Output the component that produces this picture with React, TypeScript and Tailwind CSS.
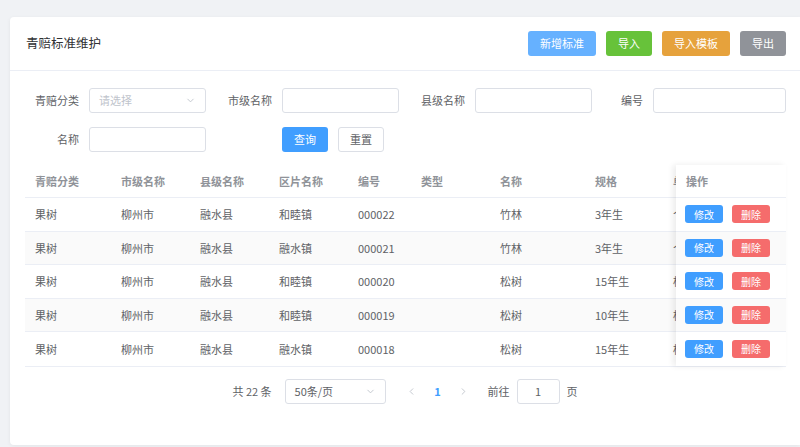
import { ChevronDown, ChevronLeft, ChevronRight } from 'lucide-react'

type Row = {
  cat: string
  city: string
  county: string
  area: string
  code: string
  type: string
  name: string
  spec: string
  unit: string
}

const rows: Row[] = [
  { cat: '果树', city: '柳州市', county: '融水县', area: '和睦镇', code: '000022', type: '', name: '竹林', spec: '3年生', unit: '个' },
  { cat: '果树', city: '柳州市', county: '融水县', area: '融水镇', code: '000021', type: '', name: '竹林', spec: '3年生', unit: '个' },
  { cat: '果树', city: '柳州市', county: '融水县', area: '和睦镇', code: '000020', type: '', name: '松树', spec: '15年生', unit: '棵' },
  { cat: '果树', city: '柳州市', county: '融水县', area: '和睦镇', code: '000019', type: '', name: '松树', spec: '10年生', unit: '棵' },
  { cat: '果树', city: '柳州市', county: '融水县', area: '融水镇', code: '000018', type: '', name: '松树', spec: '15年生', unit: '棵' }
]

const cols: { key: keyof Row; label: string; w: string }[] = [
  { key: 'cat', label: '青赔分类', w: 'w-[86px]' },
  { key: 'city', label: '市级名称', w: 'w-[79px]' },
  { key: 'county', label: '县级名称', w: 'w-[79px]' },
  { key: 'area', label: '区片名称', w: 'w-[79px]' },
  { key: 'code', label: '编号', w: 'w-[63px]' },
  { key: 'type', label: '类型', w: 'w-[79px]' },
  { key: 'name', label: '名称', w: 'w-[95px]' },
  { key: 'spec', label: '规格', w: 'w-[78px]' },
  { key: 'unit', label: '单位', w: 'w-[79px]' }
]

function Field({ label, labelW = 'w-[64px]', inputW = 'w-[117px]', select }: { label: string; labelW?: string; inputW?: string; select?: boolean }) {
  return (
    <div className="flex items-center">
      <div className={`${labelW} shrink-0 pr-[10px] text-right text-[11px] text-[#606266]`}>{label}</div>
      <div className={`${inputW} h-[25px] rounded-[3px] border border-[#dcdfe6] bg-white flex items-center justify-between px-[9px]`}>
        {select && (
          <>
            <span className="text-[11px] text-[#c0c4cc]">请选择</span>
            <ChevronDown size={11} className="text-[#c0c4cc]" />
          </>
        )}
      </div>
    </div>
  )
}

export default function App() {
  return (
    <div
      className="w-[800px] h-[447px] overflow-hidden bg-[#f0f2f5] pl-[10px] pt-[17px]"
      style={{ fontFamily: '"Noto Sans CJK SC", "Noto Sans", sans-serif' }}
    >
      <div className="h-[428px] w-[790px] rounded-tl-[4px] rounded-bl-[4px] bg-white shadow-[0_1px_4px_rgba(0,0,0,0.06)]">
        {/* Header */}
        <div className="h-[54px] flex items-center justify-between pl-[16px] pr-[14px] border-b border-[#ebeef5]">
          <h1 className="text-[12.5px] text-[#303133]">青赔标准维护</h1>
          <div className="flex gap-[10px] text-[11px] text-white">
            <button className="w-[68px] h-[25px] rounded-[3px] bg-[#66b1ff]">新增标准</button>
            <button className="w-[46px] h-[25px] rounded-[3px] bg-[#67c23a]">导入</button>
            <button className="w-[68px] h-[25px] rounded-[3px] bg-[#e6a23c]">导入模板</button>
            <button className="w-[46px] h-[25px] rounded-[3px] bg-[#909399]">导出</button>
          </div>
        </div>

        {/* Search form */}
        <div className="pl-[15px] pt-[17px] flex flex-col gap-[14px]">
          <div className="flex gap-[12px]">
            <Field label="青赔分类" select />
            <Field label="市级名称" />
            <Field label="县级名称" />
            <Field label="编号" labelW="w-[49px]" inputW="w-[133px]" />
          </div>
          <div className="flex gap-[12px]">
            <Field label="名称" />
            <div className="flex items-center pl-[64px] gap-[10px] text-[11px]">
              <button className="w-[46px] h-[25px] rounded-[3px] bg-[#409eff] text-white">查询</button>
              <button className="w-[46px] h-[25px] rounded-[3px] border border-[#dcdfe6] text-[#606266] bg-white">重置</button>
            </div>
          </div>
        </div>

        {/* Table */}
        <div className="mt-[13px] ml-[15px] w-[761px] flex border-b border-[#ebeef5] text-[11px]">
          <div className="flex-1 overflow-hidden">
            <div className="w-[800px]">
              <div className="flex h-[33px] items-center border-b border-[#ebeef5] font-bold text-[#909399]">
                {cols.map((c) => (
                  <div key={c.key} className={`${c.w} shrink-0 pl-[10px] whitespace-nowrap`}>{c.label}</div>
                ))}
              </div>
              {rows.map((r, i) => (
                <div
                  key={r.code}
                  className={`flex h-[33.5px] items-center text-[#606266] ${i < rows.length - 1 ? 'border-b border-[#ebeef5]' : ''} ${i % 2 === 1 ? 'bg-[#fafafa]' : 'bg-white'}`}
                >
                  {cols.map((c) => (
                    <div key={c.key} className={`${c.w} shrink-0 pl-[10px] whitespace-nowrap`}>{r[c.key]}</div>
                  ))}
                </div>
              ))}
            </div>
          </div>
          <div className="w-[110px] shrink-0 bg-white shadow-[-3px_0_6px_rgba(0,0,0,0.08)]">
            <div className="flex h-[33px] items-center border-b border-[#ebeef5] pl-[10px] font-bold text-[#909399]">操作</div>
            {rows.map((r, i) => (
              <div
                key={r.code}
                className={`flex h-[33.5px] items-center gap-[9px] pl-[9px] ${i < rows.length - 1 ? 'border-b border-[#ebeef5]' : ''} ${i % 2 === 1 ? 'bg-[#fafafa]' : 'bg-white'}`}
              >
                <button className="w-[38px] h-[18px] rounded-[3px] bg-[#409eff] text-[10px] text-white">修改</button>
                <button className="w-[38px] h-[18px] rounded-[3px] bg-[#f56c6c] text-[10px] text-white">删除</button>
              </div>
            ))}
          </div>
        </div>

        {/* Pagination */}
        <div className="mt-[12px] flex items-center justify-center text-[11px] text-[#606266]">
          <span className="mr-[13px]">共 22 条</span>
          <div className="w-[101px] h-[25px] rounded-[3px] border border-[#dcdfe6] flex items-center justify-between px-[9px]">
            <span className="text-[#606266]">50条/页</span>
            <ChevronDown size={11} className="text-[#c0c4cc]" />
          </div>
          <div className="ml-[14px] flex items-center">
            <div className="w-[24px] flex justify-center"><ChevronLeft size={11} className="text-[#c0c4cc]" /></div>
            <div className="w-[28px] text-center font-bold text-[#409eff]">1</div>
            <div className="w-[24px] flex justify-center"><ChevronRight size={11} className="text-[#c0c4cc]" /></div>
          </div>
          <span className="ml-[12px]">前往</span>
          <div className="ml-[7px] w-[43px] h-[25px] rounded-[3px] border border-[#dcdfe6] flex items-center justify-center">1</div>
          <span className="ml-[7px]">页</span>
        </div>
      </div>
    </div>
  )
}
